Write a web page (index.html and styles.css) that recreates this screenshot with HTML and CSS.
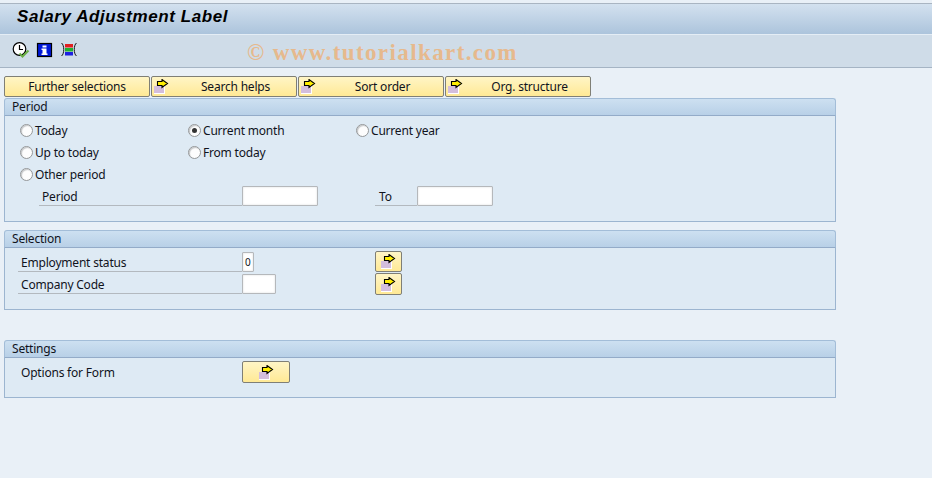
FILE: index.html
```html
<!DOCTYPE html>
<html lang="en">
<head>
<meta charset="utf-8">
<title>Salary Adjustment Label</title>
<link rel="stylesheet" href="styles.css">
</head>
<body>
<svg class="defs" width="0" height="0" aria-hidden="true">
  <symbol id="arrow" viewBox="0 0 15 15">
    <rect x="0" y="7" width="11" height="8" fill="#fff"/>
    <rect x="0" y="7" width="10" height="7" fill="#d3bddc"/>
    <path d="M3.5 2.5h4.5V.5l5.5 4-5.5 4v-2H3.500z" fill="#ffee00" stroke="#000" stroke-width="1.1"/>
  </symbol>
</svg>
<header class="title-bar"><h1>Salary Adjustment Label</h1></header>
<div class="toolbar">
  <svg class="tool" viewBox="0 0 18 18" aria-label="Execute">
    <circle cx="7.500" cy="8" r="6.300" fill="#fff" stroke="#000" stroke-width="1.200"/>
    <path d="M7.500 4v4.500h3.500" fill="none" stroke="#000" stroke-width="1.200"/>
    <path d="M7.500 12.500l3 3 6-6" fill="none" stroke="#6aae45" stroke-width="2"/>
  </svg>
  <svg class="tool" viewBox="0 0 18 18" aria-label="Information">
    <rect x="1.500" y="2.500" width="14" height="13" fill="#0018d8" stroke="#000" stroke-width="1.200"/>
    <path d="M6.500 4.500h4v2h-4zM5.500 7.500h5v5h1V14h-6v-1.500h1V9h-1z" fill="#fff"/>
  </svg>
  <svg class="tool" viewBox="0 0 18 18" aria-label="Layout">
    <path d="M1.500 2c3 2 3 11 0 13M16.500 2c-3 2-3 11 0 13" fill="none" stroke="#000" stroke-width="0.900"/>
    <rect x="5" y="3" width="8" height="3.500" fill="#e02020"/>
    <rect x="5" y="7" width="8" height="3.500" fill="#20b030"/>
    <rect x="5" y="11" width="8" height="3.500" fill="#1c20e0"/>
  </svg>
  <span class="watermark">© www.tutorialkart.com</span>
</div>
<main class="content">
  <nav class="button-row">
    <button class="btn btn-wide" type="button"><span>Further selections</span></button>
    <button class="btn btn-wide" type="button"><svg class="arrow"><use href="#arrow"/></svg><span class="btn-text">Search helps</span></button>
    <button class="btn btn-wide" type="button"><svg class="arrow"><use href="#arrow"/></svg><span class="btn-text">Sort order</span></button>
    <button class="btn btn-wide" type="button"><svg class="arrow"><use href="#arrow"/></svg><span class="btn-text">Org. structure</span></button>
  </nav>

  <section class="panel panel-period">
    <h2>Period</h2>
    <div class="panel-body period-body">
      <div class="radio-grid">
        <label class="radio"><i class="dot"></i>Today</label>
        <label class="radio"><i class="dot on"></i>Current month</label>
        <label class="radio"><i class="dot"></i>Current year</label>
        <label class="radio"><i class="dot"></i>Up to today</label>
        <label class="radio"><i class="dot"></i>From today</label>
        <span></span>
        <label class="radio"><i class="dot"></i>Other period</label>
      </div>
      <div class="period-row">
        <span class="field-label period-label">Period</span>
        <span class="input input-date"></span>
        <span class="field-label to-label">To</span>
        <span class="input input-date"></span>
      </div>
    </div>
  </section>

  <section class="panel panel-selection">
    <h2>Selection</h2>
    <div class="panel-body selection-body">
      <div class="sel-row">
        <span class="field-label sel-label">Employment status</span>
        <span class="input input-status">0</span>
        <button class="btn btn-icon" type="button"><svg class="arrow-only"><use href="#arrow"/></svg></button>
      </div>
      <div class="sel-row">
        <span class="field-label sel-label">Company Code</span>
        <span class="input input-code"></span>
        <button class="btn btn-icon btn-code" type="button"><svg class="arrow-only"><use href="#arrow"/></svg></button>
      </div>
    </div>
  </section>

  <section class="panel panel-settings">
    <h2>Settings</h2>
    <div class="panel-body settings-body">
      <span class="plain-label">Options for Form</span>
      <button class="btn btn-options" type="button"><svg class="arrow-only"><use href="#arrow"/></svg></button>
    </div>
  </section>
</main>
</body>
</html>
```

FILE: styles.css
```css
* { box-sizing: border-box; }
html, body { margin: 0; height: 100%; }
body {
  width: 932px;
  height: 478px;
  overflow: hidden;
  background: #e9f0f7;
  font-family: "Noto Sans", sans-serif;
  font-size: 12px;
  letter-spacing: -0.2px;
  color: #10131c;
}
.defs { position: absolute; }

.title-bar {
  margin-top: 3px;
  height: 32px;
  padding: 1px 0 0 17px;
  border-top: 1px solid #a9b5c2;
  border-bottom: 1px solid #e4edf5;
  background: linear-gradient(#d3e1ef, #acc4dc);
}
.title-bar h1 {
  margin: 0;
  font: italic bold 17px/24px "Liberation Sans", sans-serif;
  letter-spacing: 0.58px;
  color: #000;
}

.toolbar {
  position: relative;
  display: flex;
  align-items: center;
  gap: 6px;
  height: 33px;
  padding: 0 0 3px 12px;
  background: #cfdce8;
  border-bottom: 1px solid #a5b4c4;
}
.tool { width: 18px; height: 18px; flex: none; }
.watermark {
  position: absolute;
  left: 247px;
  top: 4px;
  font: bold 23px/28px "Liberation Serif", serif;
  letter-spacing: 1.4px;
  color: #e6b98d;
  white-space: nowrap;
}

.content { padding: 8px 0 0 4px; width: 836px; }

.button-row { display: flex; gap: 1px; height: 22px; }
.btn {
  position: relative;
  display: flex;
  align-items: center;
  justify-content: center;
  padding: 0;
  font: inherit;
  letter-spacing: inherit;
  color: inherit;
  border: 1px solid #7f7f76;
  border-radius: 2px;
  background: linear-gradient(#fff5c6, #ffe995);
}
.btn-wide { width: 146px; height: 21px; }
.btn-text { margin-left: 23px; }
.arrow { position: absolute; left: 2px; top: 2px; width: 15px; height: 15px; }
.arrow-only { width: 15px; height: 15px; }

.panel h2 {
  margin: 0;
  height: 18px;
  padding-left: 7px;
  font-size: 12px;
  font-weight: 400;
  line-height: 15px;
  border: 1px solid #a3bdd8;
  border-bottom-color: #93abc8;
  border-radius: 3px 3px 0 0;
  background: linear-gradient(#cde0f1, #b8d0e7);
}
.panel-body {
  background: #deeaf4;
  border: 1px solid #9cb5d0;
  border-top: 0;
}
.panel-period .panel-body { height: 106px; }
.panel-selection { margin-top: 8px; }
.panel-selection .panel-body { height: 62px; }
.panel-settings { margin-top: 30px; }
.panel-settings .panel-body { height: 40px; }

.period-body { padding: 3px 0 0 15px; }
.radio-grid {
  display: grid;
  grid-template-columns: repeat(3, 168px);
  grid-auto-rows: 22px;
}
.radio { display: flex; align-items: center; gap: 2px; white-space: nowrap; }
.dot {
  flex: none;
  width: 13px;
  height: 13px;
  border-radius: 50%;
  border: 1px solid #949799;
  background: #fdfdfd;
  box-shadow: inset 1px 1px 1px #c4c6c8;
  position: relative;
}
.dot.on::after {
  content: "";
  position: absolute;
  left: 3px;
  top: 3px;
  width: 5px;
  height: 5px;
  border-radius: 50%;
  background: #333;
}

.period-row, .sel-row { display: flex; align-items: flex-start; }
.period-row { height: 22px; padding: 1px 0 0 19px; }
.field-label {
  display: block;
  height: 20px;
  line-height: 21px;
  border-bottom: 1px solid #b3b9bf;
  white-space: nowrap;
}
.period-label { width: 203px; padding-left: 3px; }
.to-label { width: 42px; margin-left: 57px; padding-left: 4px; }
.input {
  display: block;
  height: 20px;
  background: #fff;
  border: 1px solid #b5b8bb;
  border-radius: 1px;
  box-shadow: inset 0 0 2px #d6d8da;
}
.input-date { width: 76px; }
.input-status { width: 12px; padding-left: 2px; font-size: 10px; line-height: 18px; }
.input-code { width: 34px; }

.selection-body { padding: 4px 0 0 13px; }
.sel-row { height: 22px; }
.sel-label { width: 224px; padding-left: 3px; }
.btn-icon { width: 27px; height: 21px; margin: -1px 0 0 121px; }
.btn-code { margin-left: 99px; height: 22px; }

.settings-body { display: flex; padding: 3px 0 0 16px; }
.plain-label { width: 221px; line-height: 24px; }
.btn-options { width: 48px; height: 22px; }
```
